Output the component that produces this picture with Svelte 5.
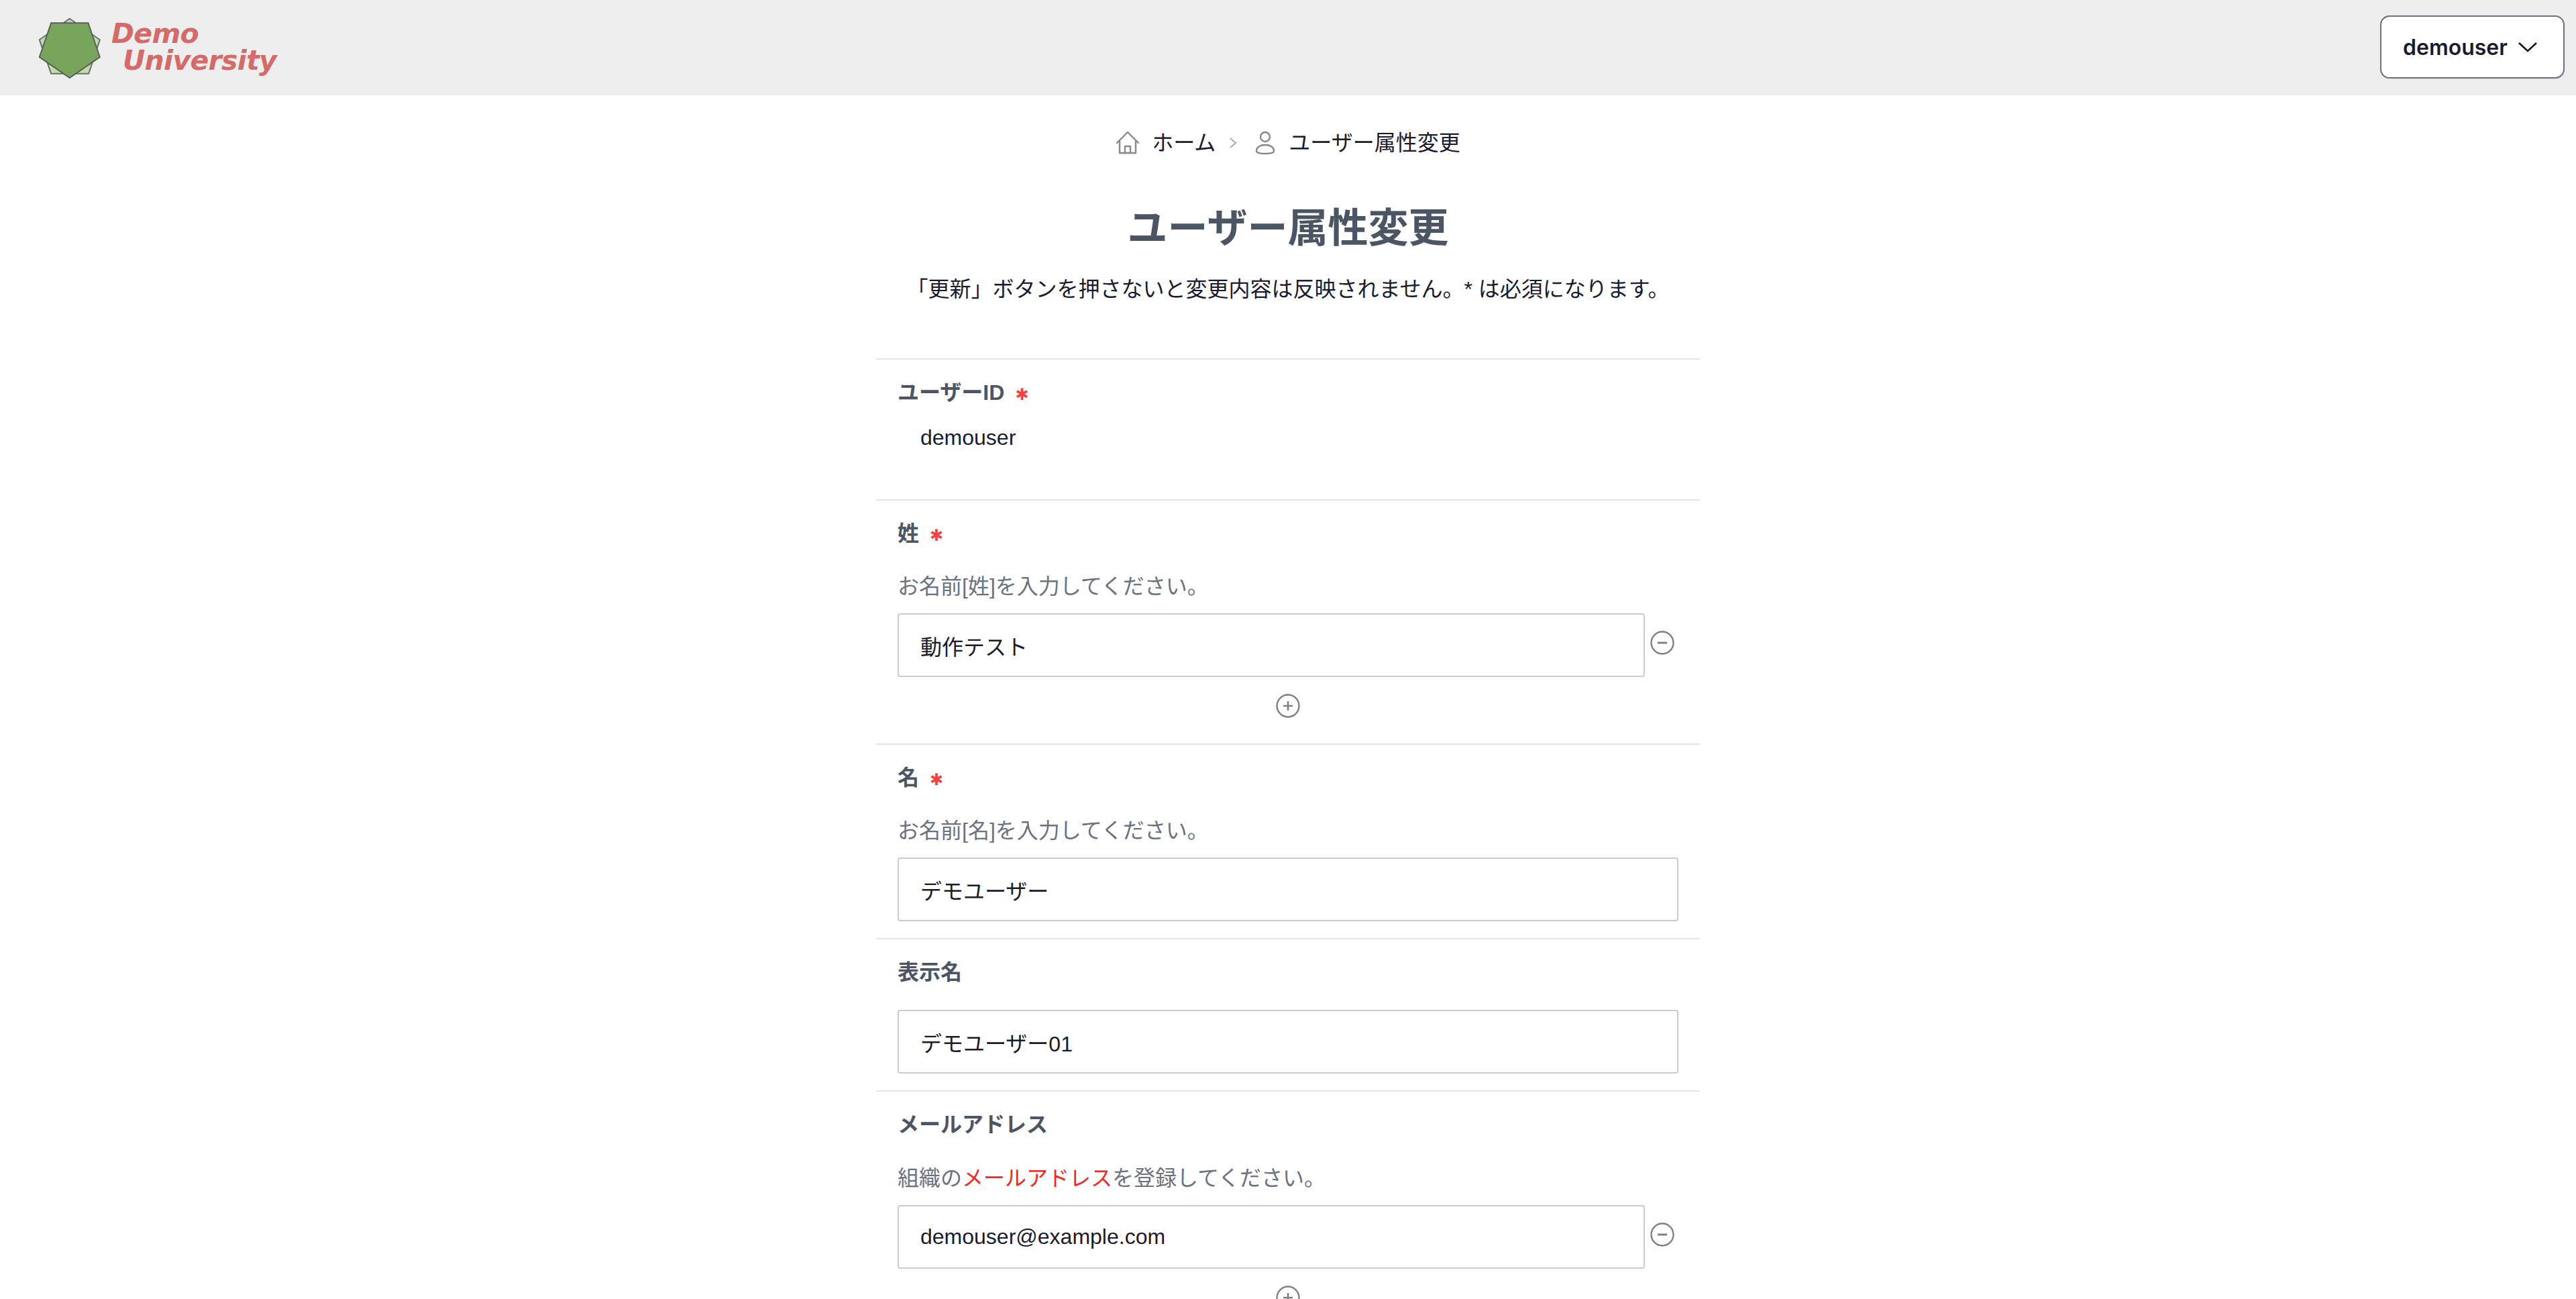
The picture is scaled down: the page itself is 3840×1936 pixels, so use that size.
<script lang="ts">
  interface Field {
    label: string;
    required?: boolean;
    help?: string;
    helpHtml?: boolean;
    value: string;
    multiple?: boolean;
  }

  const fields: Field[] = [
    { label: '姓', required: true, help: 'お名前[姓]を入力してください。', value: '動作テスト', multiple: true },
    { label: '名', required: true, help: 'お名前[名]を入力してください。', value: 'デモユーザー' },
    { label: '表示名', value: 'デモユーザー01' },
    { label: 'メールアドレス', helpHtml: true, value: 'demouser@example.com', multiple: true },
  ];
</script>

<div class="page">
  <header class="topbar">
    <a class="brand" href="#top" aria-label="Demo University">
      <svg class="mark" width="96" height="94" viewBox="56 24 95 94" aria-hidden="true">
        <polygon points="103.3,26.7 148.3,58.3 131.7,108.7 75.7,108.7 58.3,58.3" fill="#c2dcb0" stroke="#6a6f6a" stroke-width="2" />
        <polygon points="75.7,33.3 131,33.3 148.3,84 103.3,115 58.3,84" fill="#76a55b" stroke="#5a5f5a" stroke-width="2" />
      </svg>
      <span class="wordmark"><span>Demo</span><span class="second">University</span></span>
    </a>
    <button class="user-btn" type="button">
      demouser
      <svg width="30" height="16" viewBox="0 0 30 16" fill="none" stroke="#111" stroke-width="2.4" aria-hidden="true">
        <path d="M2 2l13 12L28 2" />
      </svg>
    </button>
  </header>

  <main class="content">
    <nav class="crumbs">
      <svg class="home" width="36" height="36" viewBox="0 0 36 36" fill="none" stroke="#888" stroke-width="2.4" stroke-linejoin="round" stroke-linecap="round" aria-hidden="true">
        <path d="M2 18L18 2l16 16" />
        <path d="M6 15v18h24V15" />
        <path d="M14 33V23h8v10" />
      </svg>
      <a href="#top">ホーム</a>
      <svg class="sep" width="12" height="18" viewBox="0 0 12 18" fill="none" stroke="#aaa" stroke-width="2" aria-hidden="true">
        <path d="M2 2l8 7-8 7" />
      </svg>
      <svg class="person" width="30" height="36" viewBox="0 0 30 36" fill="none" stroke="#888" stroke-width="2.4" aria-hidden="true">
        <circle cx="15" cy="9" r="7" />
        <path d="M2 30c0-6 6-9 13-9s13 3 13 9c0 3-6 4-13 4S2 33 2 30z" />
      </svg>
      <span>ユーザー属性変更</span>
    </nav>

    <h1>ユーザー属性変更</h1>
    <p class="lead">「更新」ボタンを押さないと変更内容は反映されません。* は必須になります。</p>

    <form class="form" onsubmit={(e) => e.preventDefault()}>
      <section class="field first">
        <div class="label">ユーザーID<span class="req">✱</span></div>
        <div class="static">demouser</div>
      </section>

      {#each fields as f}
        <section class="field">
          <div class="label">{f.label}{#if f.required}<span class="req">✱</span>{/if}</div>
          {#if f.help}
            <p class="help">{f.help}</p>
          {:else if f.helpHtml}
            <p class="help rich">組織の<span class="hot">メールアドレス</span>を登録してください。</p>
          {/if}
          <div class="input-row">
            <input type="text" value={f.value} />
            {#if f.multiple}
              <button class="round" type="button" aria-label="削除">
                <svg width="36" height="36" viewBox="0 0 36 36" fill="none" stroke="#808080" stroke-width="2.4" aria-hidden="true">
                  <circle cx="18" cy="18" r="16.5" />
                  <path d="M11 18h14" stroke-width="3" />
                </svg>
              </button>
            {/if}
          </div>
          {#if f.multiple}
            <div class="add">
              <button class="round" type="button" aria-label="追加">
                <svg width="36" height="36" viewBox="0 0 36 36" fill="none" stroke="#808080" stroke-width="2.4" aria-hidden="true">
                  <circle cx="18" cy="18" r="16.5" />
                  <path d="M11 18h14M18 11v14" stroke-width="2.6" />
                </svg>
              </button>
            </div>
          {/if}
        </section>
      {/each}
    </form>
  </main>
</div>

<style>
  :global(body) {
    margin: 0;
    background: #fff;
    font-family: "Liberation Sans", "Noto Sans CJK JP", sans-serif;
    font-size: 32px;
    line-height: 48px;
    color: #1a1b2e;
  }

  .page {
    height: 100vh;
    overflow: hidden;
  }

  .topbar {
    height: 142px;
    background: #eee;
    display: flex;
    align-items: center;
    justify-content: space-between;
    padding: 0 17px 0 56px;
    box-sizing: border-box;
  }

  .brand {
    display: flex;
    align-items: center;
    gap: 14px;
    text-decoration: none;
  }

  .mark {
    margin-top: 2px;
  }

  .wordmark {
    display: flex;
    flex-direction: column;
    font-family: "DejaVu Sans", sans-serif;
    font-weight: 700;
    font-style: italic;
    font-size: 41px;
    letter-spacing: -0.7px;
    line-height: 40px;
    color: #d46b6b;
    margin-top: -2px;
  }

  .second {
    margin-left: 17px;
  }

  .user-btn {
    width: 275px;
    height: 94px;
    display: flex;
    align-items: center;
    justify-content: space-between;
    padding: 0 38px 0 32px;
    margin-top: -2px;
    box-sizing: border-box;
    background: #fff;
    border: 2px solid #6b7280;
    border-radius: 14px;
    font: 600 32px Inter, sans-serif;
    color: #1a1b2e;
    box-shadow: 0 1px 2px rgba(0, 0, 0, 0.08);
  }

  .content {
    width: 1228px;
    margin: 0 auto;
  }

  .crumbs {
    display: flex;
    align-items: center;
    justify-content: center;
    height: 48px;
    margin-top: 47px;
    gap: 20px;
  }

  .crumbs a {
    color: inherit;
    text-decoration: none;
  }

  .home {
    margin-right: -2px;
  }

  .person {
    margin-right: 0;
  }

  .sep {
    margin: 0 7px 0 0;
  }

  h1 {
    margin: 68px 0 0;
    font-size: 60px;
    line-height: 72px;
    font-weight: 700;
    text-align: center;
    color: #4b5563;
  }

  .lead {
    margin: 30px 0 0;
    text-align: center;
  }

  .form {
    margin-top: 79px;
  }

  .field {
    border-top: 2px solid #e5e5e5;
    padding: 25px 32px 25px;
  }

  .field.first {
    height: 210px;
    box-sizing: border-box;
  }

  .label {
    font-weight: 700;
    color: #4b5563;
  }

  .req {
    color: #ef4444;
    font-family: "DejaVu Sans", sans-serif;
    font-size: 24px;
    margin-left: 16px;
  }

  .static {
    margin-top: 16px;
    padding-left: 34px;
  }

  .help {
    margin: 28px 0 16px;
    color: #6b7280;
  }

  .help.rich {
    margin-top: 32px;
  }

  .hot {
    color: #ef2a1e;
  }

  .input-row {
    display: flex;
    align-items: flex-start;
    gap: 8px;
    margin-top: 32px;
  }

  .help + .input-row {
    margin-top: 0;
  }

  input {
    flex: 1;
    min-width: 0;
    height: 95px;
    box-sizing: border-box;
    border: 2px solid #ccc;
    border-radius: 4px;
    padding: 0 32px;
    font: inherit;
    color: inherit;
    background: #fff;
    outline: none;
  }

  .round {
    padding: 0;
    border: 0;
    background: none;
    width: 36px;
    height: 36px;
    display: block;
    margin: 26px 6px 0 0;
  }

  .add {
    display: flex;
    justify-content: center;
    margin-top: 25px;
    margin-bottom: 13px;
  }

  .add .round {
    margin: 0;
  }
</style>
